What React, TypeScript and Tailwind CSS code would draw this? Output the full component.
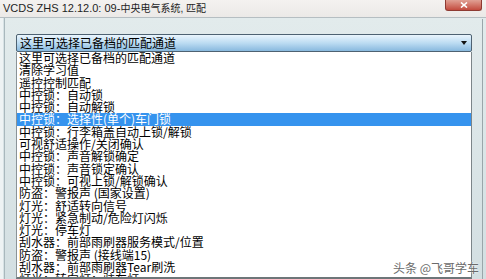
import React from "react";

const items = [
  "这里可选择已备档的匹配通道",
  "清除学习值",
  "遥控控制匹配",
  "中控锁：自动锁",
  "中控锁：自动解锁",
  "中控锁：选择性(单个)车门锁",
  "中控锁：行李箱盖自动上锁/解锁",
  "可视舒适操作/关闭确认",
  "中控锁：声音解锁确定",
  "中控锁：声音锁定确认",
  "中控锁：可视上锁/解锁确认",
  "防盗：警报声 (国家设置)",
  "灯光：舒适转向信号",
  "灯光：紧急制动/危险灯闪烁",
  "灯光：停车灯",
  "刮水器：前部雨刷器服务模式/位置",
  "防盗：警报声 (接线端15)",
  "刮水器：前部雨刷器Tear刷洗",
  "灯光：转向灯：驻车灯",
];

const SELECTED = 5;

export default function App() {
  return (
    <div
      className="relative flex h-[279px] w-[486px] flex-col overflow-hidden bg-[#d7e2e5] text-black"
      style={{ fontFamily: '"Noto Sans CJK SC", "Liberation Sans", sans-serif' }}
    >
      {/* title bar */}
      <div className="flex h-[18px] shrink-0 items-start justify-between border-b border-[#b5bec2] bg-gradient-to-b from-[#f4f2f0] to-[#ebe9e7] pl-[3px]">
        <span
          className="pt-[2px] text-[11px] leading-[13px] text-[#1e1e1e]"
          style={{ fontFamily: '"Liberation Sans", "Noto Sans CJK SC", sans-serif' }}
        >
          VCDS ZHS 12.12.0: 09-<span className="text-[10px]">中央电气系统, 匹配</span>
        </span>
        <div className="mr-[4px] flex h-[11px] w-[37px] items-center justify-center rounded-b-[3px] border border-t-0 border-[#8e3a32] bg-gradient-to-b from-[#e0a094] to-[#c24a3e]">
          <svg width="8" height="6" viewBox="0 0 8 6">
            <path d="M1 0.5 L7 5.5 M7 0.5 L1 5.5" stroke="#fff" strokeWidth="1.6" />
          </svg>
        </div>
      </div>

      {/* window body */}
      <div className="flex min-h-0 flex-1 border-l-[3px] border-[#eef3f4] pl-[1px]">
        <div className="flex min-h-0 flex-1 flex-col border-l border-[#a9b8bd] bg-gradient-to-b from-[#e2ebec] to-[#d3dfe2] pl-[11px] pr-[14px] pt-[16px]">
          {/* combo box */}
          <div className="flex h-[18px] shrink-0 items-center justify-between rounded-[2px] border border-[#4e6272] bg-gradient-to-b from-[#eaf5fd] via-[#bcdcf2] to-[#88b9de] pl-[3px] pr-[4px]">
            <span className="text-[12px] leading-[14px]">这里可选择已备档的匹配通道</span>
            <svg width="6" height="4" viewBox="0 0 6 4">
              <path d="M0 0 H6 L3 4 Z" fill="#111" />
            </svg>
          </div>

          {/* list */}
          <div className="min-h-0 flex-1 overflow-hidden border-x border-b-2 border-l-[#8a9397] border-r-[#7c8589] border-b-[#6d7679] bg-white">
            {items.map((t, i) => (
              <div
                key={t}
                className={
                  "h-[12.3px] whitespace-nowrap pl-[2px] text-[12px] leading-[12.3px] " +
                  (i === SELECTED ? "bg-[#3593ee] text-white" : "text-black")
                }
              >
                {t}
              </div>
            ))}
          </div>
        </div>
      </div>

      {/* right window frame line */}
      <div className="absolute right-[3px] top-[19px] h-[260px] w-px bg-[#9aa6aa]" />

      {/* watermark */}
      <div
        className="absolute right-[7px] top-[261px] text-[12px] leading-[14px] text-[#6b6b6b]"
        style={{ textShadow: "0 0 2px #fff, 0 0 1px #fff" }}
      >
        头条 @飞哥学车
      </div>
    </div>
  );
}
